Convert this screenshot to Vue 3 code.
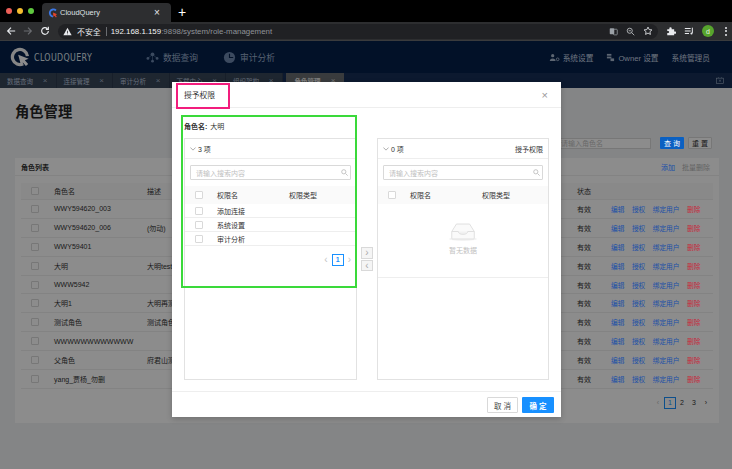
<script setup>
const tabs = [
  { t: '数据查询' }, { t: '连接管理' }, { t: '审计分析' }, { t: '下载中心' }, { t: '组织架构' }, { t: '角色管理', active: true }
]
const roles = [
  ['WWY594620_003', ''],
  ['WWY594620_006', '(勿动)'],
  ['WWY59401', ''],
  ['大明', '大明test'],
  ['WWW5942', ''],
  ['大明1', '大明再测'],
  ['测试角色', '测试角色'],
  ['WWWWWWWWWWWW', ''],
  ['父角色', '府君山测'],
  ['yang_贾杨_勿删', '']
]
const perms = ['添加连接', '系统设置', '审计分析']
</script>

<template>
  <div class="root">
    <div class="tabstrip">
      <div class="lights"><i class="red"></i><i class="yellow"></i><i class="green"></i></div>
      <div class="btab">
        <svg class="fav" viewBox="0 0 12 12" width="10" height="10">
          <path d="M9.5 3A4.3 4.3 0 1 0 6 10.3" fill="none" stroke="#3b78e7" stroke-width="2.2"/>
          <path d="M6 5.5l5 2-2 1 1.5 2-1 .8-1.6-2-1.3 1.6z" fill="#e8452c"/>
        </svg>
        <span class="btitle">CloudQuery</span>
        <span class="bclose">×</span>
      </div>
      <span class="plus">+</span>
    </div>
    <div class="toolbar">
      <svg class="navi" viewBox="0 0 12 12" width="10" height="10"><path d="M11 6H2M6 2L2 6l4 4" fill="none" stroke="#e8eaed" stroke-width="1.4"/></svg>
      <svg class="navi" viewBox="0 0 12 12" width="10" height="10"><path d="M1 6h9M6 2l4 4-4 4" fill="none" stroke="#6a6c70" stroke-width="1.4"/></svg>
      <svg class="navi" viewBox="0 0 12 12" width="10" height="10"><path d="M10 6a4 4 0 1 1-1.2-2.9M10 1v3H7" fill="none" stroke="#e8eaed" stroke-width="1.4"/></svg>
      <div class="omni">
        <svg class="warn" viewBox="0 0 12 12" width="9" height="9"><path d="M6 1l5.5 10H.5z" fill="#e8eaed"/><path d="M5.5 5h1v3h-1zM5.5 8.8h1v1h-1z" fill="#202124"/></svg>
        <span class="insecure">不安全</span>
        <span class="pipe"></span>
        <span class="addr"><span class="host">192.168.1.159</span><span class="path">:9898/system/role-management</span></span>
        <span class="grow"></span>
        <span class="omni-icons">
          <svg viewBox="0 0 12 12" width="9" height="9"><rect x="1" y="1.5" width="6" height="8" rx="1" fill="#9aa0a6"/><rect x="6" y="3" width="5" height="7.5" rx="1" fill="none" stroke="#9aa0a6"/></svg>
          <svg viewBox="0 0 12 12" width="9" height="9"><circle cx="5" cy="5" r="3.4" fill="none" stroke="#c4c7c9" stroke-width="1.1"/><path d="M7.5 7.5l3.5 3.5M3.5 5h3" stroke="#c4c7c9" stroke-width="1.1"/></svg>
          <svg viewBox="0 0 12 12" width="10" height="10"><path d="M6 1.3l1.4 3 3.3.4-2.400 2.200.6 3.200L6 8.500l-2.900 1.600.6-3.200L1.300 4.700l3.300-.4z" fill="none" stroke="#e8eaed" stroke-width="1"/></svg>
        </span>
      </div>
      <div class="exts">
        <svg viewBox="0 0 12 12" width="10" height="10"><path d="M1.500 4H4V2.800a1.400 1.400 0 0 1 2.800 0V4h3v2.500H11a1.400 1.400 0 0 1 0 2.800H9.800V11H1.500V8.500h1a1.300 1.300 0 0 0 0-2.600h-1z" fill="#e8eaed"/></svg>
        <svg viewBox="0 0 12 12" width="10" height="10"><path d="M1 3h7M1 6h7M1 9h5" stroke="#e8eaed" stroke-width="1.200"/><path d="M10 2v6.500" stroke="#e8eaed" stroke-width="1.200"/><circle cx="9" cy="9" r="1.300" fill="#e8eaed"/></svg>
        <span class="avatar">d</span>
        <span class="kebab"><i></i><i></i><i></i></span>
      </div>
    </div>

    <div class="app">
      <header class="apphead">
        <svg class="logo" viewBox="0 0 22 22" width="20" height="20">
          <path d="M14.500 18.500A8.300 8.300 0 1 1 19.200 10" fill="none" stroke="#f4f4f4" stroke-width="3.600"/>
          <path d="M9 8.500l11.500 4.500-4.200 1.600 3.700 4-2.500 2.400-3.400-4-2 3.200z" fill="#fff"/>
        </svg>
        <span class="brand">CLOUDQUERY</span>
        <nav class="mainnav">
          <span class="navitem">
            <svg viewBox="0 0 14 12" width="13" height="11"><g fill="#6d87ae"><circle cx="7" cy="2.500" r="2"/><circle cx="2" cy="7" r="1.500"/><circle cx="12" cy="7" r="1.500"/><circle cx="7" cy="10" r="1.500"/></g><path d="M7 2.500L2 7M7 2.500L12 7M7 2.500V10" stroke="#6d87ae" stroke-width=".6"/></svg>
            数据查询
          </span>
          <span class="navitem">
            <svg viewBox="0 0 14 14" width="13" height="13"><circle cx="7" cy="7" r="6" fill="#6d87ae"/><path d="M7 3v4h4" fill="none" stroke="#041f4a" stroke-width="1.200"/></svg>
            审计分析
          </span>
        </nav>
        <span class="grow"></span>
        <div class="usernav">
          <span class="uitem">
            <svg viewBox="0 0 12 10" width="11" height="9"><circle cx="4" cy="3" r="1.800" fill="#a9bad0"/><path d="M.8 9a3.200 3 0 0 1 6.400 0z" fill="#a9bad0"/><circle cx="9.500" cy="7" r="1.500" fill="none" stroke="#a9bad0"/></svg>
            系统设置
          </span>
          <span class="uitem">
            <svg viewBox="0 0 10 10" width="9" height="9"><rect x="1" y="1" width="5" height="2" fill="#a9bad0"/><rect x="1" y="4" width="5" height="2" fill="#a9bad0"/><rect x="5" y="6" width="4" height="3" fill="#a9bad0"/></svg>
            Owner 设置
          </span>
          <span class="uitem">系统管理员</span>
        </div>
      </header>
      <div class="tabbar">
        <div v-for="t in tabs" :key="t.t" class="ptab" :class="{ on: t.active }">
          <span>{{ t.t }}</span><span class="px">×</span>
        </div>
        <span class="grow"></span>
        <svg class="tabicon" viewBox="0 0 10 9" width="8" height="7"><rect x=".5" y="1.500" width="9" height="7" fill="none" stroke="#9fb0c6" stroke-width=".8"/><path d="M3.500 3.500l3 2.500M6.500 3.500l-3 2.500M3 1V0M7 1V0" stroke="#9fb0c6" stroke-width=".7"/></svg>
      </div>

      <main class="page">
        <h1 class="ptitle">角色管理</h1>
        <div class="filters">
          <div class="finput">请输入角色名</div>
          <button class="qbtn">查 询</button>
          <button class="rbtn">重 置</button>
        </div>
        <section class="card">
          <div class="cardhead">
            <b>角色列表</b>
            <span class="grow"></span>
            <a class="add">添加</a>
            <a class="batch">批量删除</a>
          </div>
          <div class="row thead">
            <span class="c-check"><i class="cb"></i></span>
            <span class="c-name">角色名</span>
            <span class="c-desc">描述</span>
            <span class="c-status">状态</span>
          </div>
          <div v-for="r in roles" :key="r[0]" class="row">
            <span class="c-check"><i class="cb"></i></span>
            <span class="c-name">{{ r[0] }}</span>
            <span class="c-desc">{{ r[1] }}</span>
            <span class="c-status">有效</span>
            <span class="acts"><a>编辑</a><a>授权</a><a>绑定用户</a><a class="del">删除</a></span>
          </div>
          <div class="pager">
            <span class="pg dim">‹</span><span class="pg cur">1</span><span class="pg">2</span><span class="pg">3</span><span class="pg">›</span>
          </div>
        </section>
      </main>

      <div class="mask"></div>
      <div class="modal">
        <div class="mhead"><span>授予权限</span><span class="mclose">×</span></div>
        <div class="mbody">
          <div class="rolename"><b>角色名:</b><span>大明</span></div>
          <div class="transfer">
            <div class="panel">
              <div class="phead"><svg viewBox="0 0 8 5" width="6" height="4"><path d="M.5.500L4 4 7.500.500" fill="none" stroke="#777" stroke-width=".8"/></svg><span>3 项</span></div>
              <div class="psearch"><span>请输入搜索内容</span><svg viewBox="0 0 10 10" width="7" height="7"><circle cx="4" cy="4" r="3" fill="none" stroke="#bbb" stroke-width="1.200"/><path d="M6.500 6.500l3 3" stroke="#bbb" stroke-width="1.200"/></svg></div>
              <div class="trow tth"><span class="t-c"><i class="cb"></i></span><span class="t-n">权限名</span><span>权限类型</span></div>
              <div v-for="p in perms" :key="p" class="trow"><span class="t-c"><i class="cb"></i></span><span class="t-n">{{ p }}</span></div>
              <div class="mini"><span class="dim">‹</span><span class="minicur">1</span><span class="dim">›</span></div>
            </div>
            <div class="moves">
              <span class="mv">›</span>
              <span class="mv">‹</span>
            </div>
            <div class="panel">
              <div class="phead"><svg viewBox="0 0 8 5" width="6" height="4"><path d="M.5.500L4 4 7.500.500" fill="none" stroke="#777" stroke-width=".8"/></svg><span>0 项</span><span class="grow"></span><span>授予权限</span></div>
              <div class="psearch"><span>请输入搜索内容</span><svg viewBox="0 0 10 10" width="7" height="7"><circle cx="4" cy="4" r="3" fill="none" stroke="#bbb" stroke-width="1.200"/><path d="M6.500 6.500l3 3" stroke="#bbb" stroke-width="1.200"/></svg></div>
              <div class="trow tth"><span class="t-c"><i class="cb"></i></span><span class="t-n">权限名</span><span>权限类型</span></div>
              <div class="empty">
                <svg viewBox="0 0 32 20" width="30" height="19">
                  <ellipse cx="16" cy="18" rx="15" ry="2" fill="#f3f3f3"/>
                  <path d="M4 10l5-8h14l5 8v7a1 1 0 0 1-1 1H5a1 1 0 0 1-1-1z" fill="#fafafa" stroke="#dedede"/>
                  <path d="M4 10h7c0 2 2 3 5 3s5-1 5-3h7" fill="#f2f2f2" stroke="#dedede"/>
                </svg>
                <span>暂无数据</span>
              </div>
            </div>
          </div>
        </div>
        <div class="mfoot">
          <button class="cancel">取 消</button>
          <button class="ok">确 定</button>
        </div>
        <div class="mark-pink"></div>
        <div class="mark-green"></div>
      </div>
    </div>
  </div>
</template>

<style>
html, body { margin: 0; background: #87888c; }
</style>

<style scoped>
* { box-sizing: border-box; }
.root { width: 732px; height: 469px; overflow: hidden; display: flex; flex-direction: column; font-family: "Liberation Sans", "Noto Sans CJK SC", sans-serif; font-size: 7px; color: #333; }
.grow { flex: 1; }
button { font-family: inherit; padding: 0; border-radius: 1px; cursor: pointer; }
a { display: inline-block; }

.tabstrip { height: 22px; background: #000; display: flex; align-items: flex-end; flex: none; }
.lights { display: flex; gap: 5px; width: 42px; padding: 0 0 8px 6px; }
.lights i { width: 6px; height: 6px; border-radius: 50%; }
.red { background: #ed5f58; } .yellow { background: #f5bd2f; } .green { background: #5fc83f; }
.btab { width: 129px; height: 19px; background: #2d2e30; border-radius: 4px 4px 0 0; display: flex; align-items: center; padding: 0 17px 0 6px; color: #dfe1e4; font-size: 7.500px; }
.fav { margin-right: 2px; }
.btitle { flex: 1; }
.bclose { font-size: 10px; color: #e8eaed; width: 0; }
.plus { color: #fff; font-size: 14px; margin: 0 0 1px 7px; line-height: 18px; }

.toolbar { height: 19px; background: #2d2e30; flex: none; display: flex; align-items: center; padding-left: 6px; border-bottom: 1px solid #3a3b3d; }
.navi { margin-right: 7px; }
.omni { flex: 1; height: 15px; margin: 0 8px 0 1px; background: #202124; border-radius: 8px; display: flex; align-items: center; gap: 5px; padding: 0 5px 0 5px; color: #e8eaed; font-size: 7.900px; }
.warn { flex: none; }
.pipe { width: 1px; height: 9px; background: #6a6c70; margin: 0 -1px 0 0; }
.host { color: #f1f3f4; }
.path { color: #8f9398; }
.omni-icons { display: flex; align-items: center; gap: 8px; }
.exts { display: flex; align-items: center; gap: 8px; padding-right: 5px; }
.avatar { width: 12px; height: 12px; border-radius: 50%; background: #57a52d; color: #e8f3e0; font-size: 7px; display: flex; align-items: center; justify-content: center; margin-right: 2px; }
.kebab { display: flex; flex-direction: column; gap: 1.500px; margin-left: 1px; }
.kebab i { width: 2px; height: 2px; background: #e8eaed; border-radius: 50%; }

.app { position: relative; flex: 1; background: #f0f2f5; min-height: 0; }
.apphead { height: 32px; background: #041f4a; display: flex; align-items: center; padding: 0 22px 0 10px; color: #dce7f0; }
.logo { flex: none; }
.brand { font-family: "DejaVu Sans Condensed", "DejaVu Sans", sans-serif; font-size: 10px; letter-spacing: .4px; color: #dfe6ec; margin-left: 4px; width: 73px; transform: scaleX(.88); transform-origin: left; }
.mainnav { display: flex; gap: 25px; margin-left: 39px; color: #9db0cc; font-size: 8.750px; }
.navitem { display: flex; align-items: center; gap: 4px; }
.usernav { display: flex; gap: 13px; color: #c6d3e3; font-size: 7.700px; }
.uitem { display: flex; align-items: center; gap: 3px; }
.tabbar { height: 15px; background: #162f57; display: flex; align-items: stretch; padding: 0 8px 0 0; color: #b7c4da; font-size: 6.500px; }
.ptab { width: 56.500px; display: flex; align-items: center; justify-content: space-between; padding: 0 8px 0 7px; background: #384558; border-right: 1px solid #2c3a4e; }
.ptab.on { background: #696c6f; color: #e8e8e8; font-weight: 700; margin-left: 3px; width: 58px; padding-left: 9px; border-right: 0; }
.px { font-size: 8px; font-weight: 400; opacity: .8; }
.tabicon { align-self: center; }

.page { padding: 0 13px 0 15px; }
.ptitle { margin: 0; padding-top: 15px; font-size: 14.300px; line-height: 18px; font-weight: 700; color: #262626; height: 33px; }
.filters { height: 16px; margin-top: 14px; display: flex; justify-content: flex-end; align-items: center; padding-right: 7px; }
.finput { width: 96px; height: 11px; background: #fff; border: 1px solid #d9d9d9; margin-right: 9px; color: #bfbfbf; padding-left: 5px; line-height: 9px; white-space: nowrap; overflow: hidden; }
.qbtn { width: 24px; height: 12px; background: #0a60c2; color: #fff; border: 0; font-size: 7px; margin-right: 4px; position: relative; z-index: 1; }
.rbtn { width: 24px; height: 12px; background: #fff; border: 1px solid #d9d9d9; color: #333; font-size: 7px; }
.card { margin-top: 7px; height: 265px; background: #fff; padding: 0 6px; }
.cardhead { height: 18px; display: flex; align-items: center; margin: 0 -6px; padding: 0 9px 0 6px; border-bottom: 1px solid #eee; }
.cardhead b { font-weight: 600; }
.add { color: #1a4fa8; margin-right: 7px; position: relative; z-index: 1; }
.batch { color: #b5b5b5; }
.row { height: 18.900px; display: flex; align-items: center; border-bottom: 1px solid #eee; }
.thead { margin-top: 7px; height: 17px; background: #fafafa; }
.c-check { width: 33px; padding-left: 10px; display: flex; flex: none; }
.c-name { width: 93px; flex: none; white-space: nowrap; }
.c-desc { width: 430px; flex: none; }
.c-status { width: 34px; flex: none; }
.cb { display: block; width: 8px; height: 8px; border: 1px solid #d9d9d9; background: #fff; border-radius: 1px; }
.acts { display: flex; gap: 7.500px; font-size: 6.700px; position: relative; z-index: 1; }
.acts a { color: #1a4fa8; }
.acts .del { color: #c9283c; }
.pager { display: flex; align-items: center; justify-content: flex-end; margin-top: 8px; padding-right: 1px; height: 12px; color: #333; }
.pg { width: 12px; text-align: center; line-height: 11px; }
.pg.dim { color: #bbb; }
.pg.cur { border: 1px solid #1890ff; color: #1890ff; height: 12px; line-height: 10px; }

.mask { position: absolute; inset: 0; background: rgba(0, 0, 0, .45); }
.modal { position: absolute; z-index: 2; left: 172px; top: 41px; width: 389px; height: 335px; background: #fff; display: flex; flex-direction: column; box-shadow: 0 2px 6px rgba(0,0,0,.2); color: #333; }
.mhead { height: 26px; flex: none; display: flex; align-items: center; justify-content: space-between; padding: 0 13px 0 12px; border-bottom: 1px solid #eee; font-size: 7.750px; }
.mclose { font-size: 11px; color: #999; }
.mbody { flex: 1; padding: 0 12px; min-height: 0; }
.rolename { height: 30px; display: flex; align-items: center; gap: 3px; padding-top: 6px; font-size: 7px; }
.rolename b { font-weight: 700; }
.transfer { display: flex; height: 242px; }
.panel { width: 173px; border: 1px solid #e2e2e2; flex: none; display: flex; flex-direction: column; }
.panel + .moves + .panel { width: 172px; }
.phead { height: 20px; flex: none; border-bottom: 1px solid #eee; display: flex; align-items: center; gap: 2px; padding: 0 5px; font-size: 7px; }
.psearch { height: 15px; margin: 6px 5px 6px; flex: none; border: 1px solid #d9d9d9; border-radius: 1px; display: flex; align-items: center; justify-content: space-between; padding: 0 2px 0 5px; color: #bfbfbf; }
.trow { height: 14px; flex: none; display: flex; align-items: center; border-bottom: 1px solid #eee; }
.tth { height: 18px; background: #fafafa; border-bottom: 0; }
.t-c { width: 32px; padding-left: 10px; flex: none; }
.t-n { width: 72px; flex: none; }
.mini { display: flex; justify-content: flex-end; align-items: center; gap: 4px; margin-top: 7px; padding-right: 5px; height: 13px; }
.mini .dim { color: #c4c4c4; font-size: 10px; }
.minicur { width: 12px; height: 12px; border: 1px solid #1890ff; color: #1890ff; text-align: center; line-height: 10px; font-weight: 700; }
.moves { width: 20px; flex: none; display: flex; flex-direction: column; align-items: center; gap: 1px; padding-top: 109px; }
.mv { width: 12px; height: 11.500px; background: #f5f5f5; border: 1px solid #d9d9d9; color: #aaa; text-align: center; line-height: 9px; font-size: 10px; }
.empty { height: 74px; flex: none; border-bottom: 1px solid #eee; display: flex; flex-direction: column; align-items: center; padding-top: 18px; gap: 4px; color: #bfbfbf; }
.mfoot { height: 26px; flex: none; border-top: 1px solid #eee; display: flex; justify-content: flex-end; gap: 4px; padding: 5px 7px 0 0; align-items: flex-start; }
.cancel { width: 31px; height: 16px; background: #fff; border: 1px solid #d9d9d9; color: #444; font-size: 7.500px; }
.ok { width: 32px; height: 16px; background: #1890ff; border: 0; color: #fff; font-size: 7.500px; font-weight: 700; }
.mark-pink { position: absolute; left: 4px; top: 1px; width: 54px; height: 26px; border: 2px solid #f21d7d; pointer-events: none; }
.mark-green { position: absolute; left: 9px; top: 33px; width: 176px; height: 173px; border: 2px solid #3ad93a; pointer-events: none; }
</style>
